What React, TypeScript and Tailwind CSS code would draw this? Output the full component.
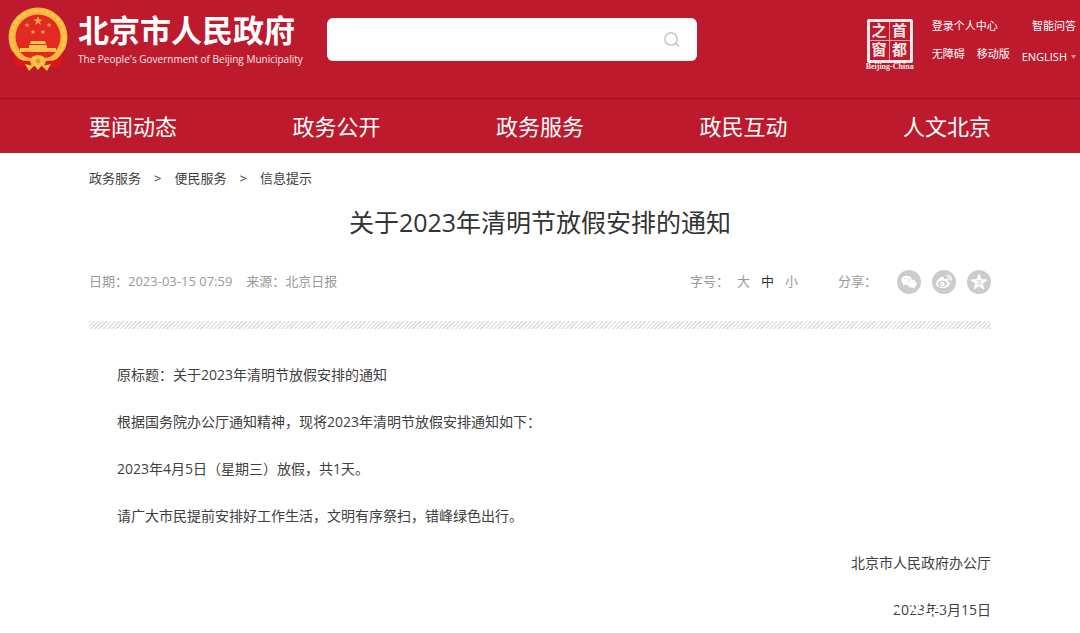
import { FaWeixin, FaWeibo } from "react-icons/fa";

const navLinks = ["要闻动态", "政务公开", "政务服务", "政民互动", "人文北京"];

const paragraphs = [
  "原标题：关于2023年清明节放假安排的通知",
  "根据国务院办公厅通知精神，现将2023年清明节放假安排通知如下：",
  "2023年4月5日（星期三）放假，共1天。",
  "请广大市民提前安排好工作生活，文明有序祭扫，错峰绿色出行。",
];

const STAR = "M0 -10 2.4 -3.1 9.5 -3.1 3.8 1.2 5.9 8.1 0 4 -5.9 8.1 -3.8 1.2 -9.5 -3.1 -2.4 -3.1Z";

function Emblem() {
  return (
    <svg className="w-[60px] h-[66px] shrink-0" viewBox="0 0 60 66" aria-hidden="true">
      <path d="M4 45 L8 60 L17 59 L21 65 L30 61 L39 65 L43 59 L52 60 L56 45Z" fill="#cf1119" />
      <circle cx="30" cy="30" r="29.5" fill="#f5b53f" />
      <circle cx="30" cy="30" r="26.5" fill="none" stroke="#fac850" strokeWidth="3" strokeDasharray="4 2" />
      <circle cx="30" cy="30" r="22.5" fill="#e22a22" />
      <g fill="#f9a63a">
        <path d={STAR} transform="translate(30 14) scale(.5)" />
        <path d={STAR} transform="translate(19 18) scale(.28)" />
        <path d={STAR} transform="translate(41 18) scale(.28)" />
        <path d={STAR} transform="translate(25 25) scale(.28)" />
        <path d={STAR} transform="translate(35 25) scale(.28)" />
      </g>
      <g fill="#fbc04a">
        <path d="M23 34h14l1 3H22Z" />
        <path d="M21 38h18v3H21Z" />
        <path d="M12 41h36v4H12Z" />
      </g>
      <path d="M12 45h36q-6 8-18 8t-18-8Z" fill="#e5281f" />
      <path d="M5 44 Q9 55 22 54 L24 60 Q12 61 7 58ZM55 44 Q51 55 38 54 L36 60 Q48 61 53 58Z" fill="#dc161c" />
      <path d="M11 46q6 7 14 6M49 46q-6 7-14 6" stroke="#f9b13a" strokeWidth="2.5" fill="none" />
      <path d="M22 54q2-6 8-6t8 6l-4 2h-8Z" fill="#fbc447" />
      <circle cx="30" cy="54" r="2.5" fill="#e9962e" />
      <path d="M17 57l9 2-5 5ZM43 57l-9 2 5 5ZM26 58h8l-4 5Z" fill="#fbc447" />
    </svg>
  );
}

function CapitalWindow() {
  return (
    <a href="#" aria-label="首都之窗" className="flex flex-col items-center shrink-0 text-[#fde8e8]">
      <span className="grid grid-cols-2 grid-rows-2 w-[46px] h-11 border-3 border-current rounded-xs font-['Liberation_Serif','Noto_Sans_CJK_SC',serif] text-[15px] leading-[18px] font-bold text-center">
        <span className="border-r border-b border-white/60">之</span>
        <span className="border-b border-white/60">首</span>
        <span className="border-r border-white/60">窗</span>
        <span>都</span>
      </span>
      <span className="font-['Liberation_Serif',serif] font-bold text-[8px] leading-2">Beijing-China</span>
    </a>
  );
}

function ShareStar() {
  return (
    <svg className="w-4 h-4" viewBox="0 0 20 20" aria-hidden="true">
      <path d={STAR} transform="translate(10 10.5)" fill="#fff" stroke="#fff" strokeWidth="1.5" strokeLinejoin="round" />
      <path d="M7 8.5h5.5L8 12.5h5.5" fill="none" stroke="#ccc" strokeWidth="1.2" />
    </svg>
  );
}

export default function App() {
  return (
    <div className="min-h-screen bg-white font-['Open_Sans','Noto_Sans_CJK_SC',sans-serif] text-[#404040]">
      <header className="bg-[#bd1a2d] text-white">
        <div className="flex items-start h-[98px] pl-2 pr-1 pt-[7px]">
          {/* Logo */}
          <a href="#" className="flex items-start gap-2.5 shrink-0">
            <Emblem />
            <span className="flex flex-col pt-[3px]">
              <span className="text-[31px] leading-10 font-bold">北京市人民政府</span>
              <span className="text-[10px] leading-[18px] text-white/90 whitespace-nowrap">
                The People's Government of Beijing Municipality
              </span>
            </span>
          </a>

          {/* Search */}
          <form className="flex items-center w-[370px] h-[43px] ml-6 mt-[11px] pr-4 rounded-md bg-white">
            <input type="text" aria-label="搜索" className="flex-1 min-w-0 h-full px-4 text-sm text-gray-700 outline-none" />
            <button type="button" aria-label="搜索">
              <svg className="w-[18px] h-[18px]" viewBox="0 0 18 18" fill="none" stroke="#c8c8c8" strokeWidth="1.6">
                <circle cx="8" cy="8" r="6.2" />
                <path d="M12.4 12.4 16 15.4" />
              </svg>
            </button>
          </form>

          {/* Utility links */}
          <div className="flex items-start gap-[18px] ml-auto mt-3 shrink-0">
            <CapitalWindow />
            <div className="flex flex-col gap-3 -mt-px text-[11px] leading-4 whitespace-nowrap">
              <div className="flex justify-between">
                <a href="#">登录个人中心</a>
                <a href="#">智能问答</a>
              </div>
              <div className="flex gap-3">
                <a href="#">无障碍</a>
                <a href="#">移动版</a>
                <button type="button" className="flex items-center gap-1 pt-[3px]">
                  ENGLISH
                  <svg className="w-[5px] h-1" viewBox="0 0 5 4" fill="#e58a93"><path d="M0 0h5L2.5 4Z" /></svg>
                </button>
              </div>
            </div>
          </div>
        </div>

        <nav className="border-t border-[#9c1424]">
          <div className="flex justify-between max-w-[902px] mx-auto h-[54px] text-[22px] leading-[54px]">
            {navLinks.map((label) => (
              <a key={label} href="#">{label}</a>
            ))}
          </div>
        </nav>
      </header>

      <main className="max-w-[902px] mx-auto pt-[15px]">
        <nav aria-label="当前位置" className="flex gap-[13px] text-[13px] leading-5">
          <a href="#">政务服务</a>
          <span>&gt;</span>
          <a href="#">便民服务</a>
          <span>&gt;</span>
          <a href="#">信息提示</a>
        </nav>

        <h1 className="mt-4 text-center text-[25px] leading-9 text-[#333]">关于2023年清明节放假安排的通知</h1>

        <div className="flex items-center justify-between mt-[30px] h-6 text-[13px] text-[#999]">
          <div className="flex gap-3.5">
            <span>日期：2023-03-15 07:59</span>
            <span>来源：北京日报</span>
          </div>
          <div className="flex items-center">
            <span>字号：</span>
            <div className="flex gap-[11px] ml-2">
              <button type="button">大</button>
              <button type="button" className="text-[#333]">中</button>
              <button type="button">小</button>
            </div>
            <span className="ml-10">分享：</span>
            <div className="flex gap-[11px] ml-5 text-white">
              <button type="button" aria-label="微信" className="flex items-center justify-center w-6 h-6 rounded-full bg-[#ccc]">
                <FaWeixin className="w-4 h-4" />
              </button>
              <button type="button" aria-label="微博" className="flex items-center justify-center w-6 h-6 rounded-full bg-[#ccc]">
                <FaWeibo className="w-4 h-4" />
              </button>
              <button type="button" aria-label="QQ空间" className="flex items-center justify-center w-6 h-6 rounded-full bg-[#ccc]">
                <ShareStar />
              </button>
            </div>
          </div>
        </div>

        <div className="h-2 mt-[27px] bg-[repeating-linear-gradient(135deg,#e0e0e0_0px,#e0e0e0_1px,#fff_2px,#fff_3px)]" />

        <article className="pt-[34px] text-sm leading-[23px]">
          <div className="flex flex-col gap-6 pl-7">
            {paragraphs.map((text) => (
              <p key={text}>{text}</p>
            ))}
          </div>
          <div className="flex flex-col items-end gap-6 mt-6">
            <p>北京市人民政府办公厅</p>
            <p className="relative">
              2023年3月15日
              {/* white watermark strokes across the date */}
              <svg className="absolute left-0 top-0 w-14 h-6" viewBox="0 0 56 24" fill="none" stroke="#fff" strokeWidth="2" aria-hidden="true">
                <path d="M0 10h5M4 14l4-6M17 16l3-9M20 12h5M27 7l-2 5M28 14h4M34 8l-3 10M37 15h5M44 7l-3 7M46 14h3M51 8l-3 5" />
              </svg>
            </p>
          </div>
        </article>
      </main>
    </div>
  );
}
